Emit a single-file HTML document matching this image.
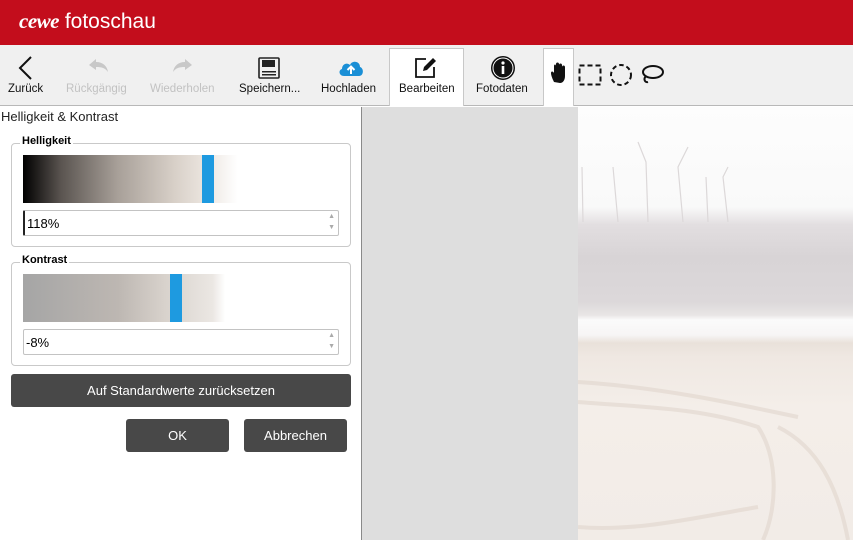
<!DOCTYPE html>
<html><head><meta charset="utf-8"><style>
*{margin:0;padding:0;box-sizing:border-box}
body{width:853px;height:540px;overflow:hidden;position:relative;font-family:"Liberation Sans",sans-serif;background:#fff}
.abs{position:absolute}
#hdr{left:0;top:0;width:853px;height:45px;background:#c30d1c}
#tb{left:0;top:45px;width:853px;height:61px;background:#f0f0f0;border-bottom:1px solid #b8b8b8}
.lbl{position:absolute;top:38px;font-size:11.5px;color:#111;white-space:nowrap}
.dis{color:#c2c2c2}
.sel{position:absolute;background:#fff;border:1px solid #c8c8c8;border-bottom:none}
.grp{position:absolute;left:11px;width:340px;border:1px solid #c9c9c9;border-radius:4px}
.gt{position:absolute;left:8px;top:-9px;background:#fff;font-size:11px;font-weight:bold;padding:0 2px}
.inp{position:absolute;left:11px;width:316px;height:26px;border:1px solid #c3c3c3;border-radius:2px;font-size:13px;padding:5px 2px}
.sp{position:absolute;right:3px;font-size:7px;color:#aaa;line-height:8px}
.btn{position:absolute;background:#484848;color:#fff;border-radius:3px;font-size:13px;text-align:center}
.bar{position:absolute;left:11px;width:316px;height:48px}
</style></head><body>
<div id="hdr" class="abs"><div class="abs" style="left:19px;top:9px;color:#fff;font-size:21px;white-space:nowrap"><span style="font-weight:bold;font-style:italic;font-family:'Liberation Serif',serif;letter-spacing:-0.5px">cewe</span> fotoschau</div></div>
<div id="tb" class="abs">
 <div class="sel" style="left:389px;top:3px;width:75px;height:58px"></div>
 <div class="sel" style="left:543px;top:3px;width:31px;height:58px"></div>
 <svg class="abs" style="left:16px;top:10px" width="20" height="26"><path d="M15 2 L4 13 L15 24" fill="none" stroke="#111" stroke-width="2"/></svg>
 <div class="lbl" style="left:8px">Zurück</div>
 <svg class="abs" style="left:86px;top:13px" width="24" height="16"><path d="M3 7 L10 1 V4 C17 4 21 8 22 14 C19 10 16 9 10 9 V12 Z" fill="#c8c8c8"/></svg>
 <div class="lbl dis" style="left:66px">Rückgängig</div>
 <svg class="abs" style="left:171px;top:13px" width="24" height="16"><path d="M21 7 L14 1 V4 C7 4 3 8 2 14 C5 10 8 9 14 9 V12 Z" fill="#c8c8c8"/></svg>
 <div class="lbl dis" style="left:150px">Wiederholen</div>
 <svg class="abs" style="left:258px;top:12px" width="22" height="22"><rect x="1" y="1" width="20" height="20" rx="1" fill="none" stroke="#222" stroke-width="1.6"/><rect x="4" y="3" width="13" height="7" fill="#222"/><rect x="4" y="14" width="14" height="1.5" fill="#222"/><rect x="4" y="17" width="14" height="1.5" fill="#222"/></svg>
 <div class="lbl" style="left:239px">Speichern...</div>
 <svg class="abs" style="left:338px;top:14px" width="26" height="18"><path d="M6 17 C1 17 0 11 4 10 C4 5 9 3 12 6 C14 1 22 2 22 8 C26 9 26 17 21 17 Z" fill="#1a8fd6"/><path d="M13 15 V8 M9.5 11 L13 7.5 L16.5 11" stroke="#fff" stroke-width="2" fill="none"/></svg>
 <div class="lbl" style="left:321px">Hochladen</div>
 <svg class="abs" style="left:414px;top:12px" width="24" height="22"><path d="M12 2 H2 V20 H20 V10" fill="none" stroke="#111" stroke-width="1.8"/><path d="M9 14 L10 10 L19 1 L22 4 L13 13 Z" fill="#111"/></svg>
 <div class="lbl" style="left:399px">Bearbeiten</div>
 <svg class="abs" style="left:490px;top:10px" width="26" height="26"><circle cx="13" cy="13" r="12" fill="#111"/><circle cx="13" cy="13" r="10" fill="none" stroke="#fff" stroke-width="1"/><circle cx="13" cy="8" r="1.6" fill="#fff"/><rect x="11.7" y="11" width="2.6" height="8" fill="#fff"/></svg>
 <div class="lbl" style="left:476px">Fotodaten</div>
 <svg class="abs" style="left:550px;top:17px" width="18" height="22"><path d="M4 20 C2 16 1 13 1 11 C1 9 3 9 4 11 V4 C4 2 6 2 6 4 V2 C6 0 9 0 9 2 V3 C9 1 12 1 12 3 V5 C12 3 15 3 15 5 V14 C15 18 13 21 10 21 Z" fill="#111"/></svg>
 <svg class="abs" style="left:578px;top:19px" width="24" height="22"><rect x="1.5" y="1.5" width="21" height="19" fill="none" stroke="#111" stroke-width="2" stroke-dasharray="5 3"/></svg>
 <svg class="abs" style="left:608px;top:18px" width="26" height="24"><circle cx="13" cy="12" r="10" fill="none" stroke="#111" stroke-width="2" stroke-dasharray="4.5 3"/></svg>
 <svg class="abs" style="left:639px;top:19px" width="26" height="22"><ellipse cx="14" cy="8" rx="10" ry="6" fill="none" stroke="#111" stroke-width="2"/><path d="M7 12 C4 15 6 19 9 18" fill="none" stroke="#111" stroke-width="2"/></svg>
</div>
<div class="abs" style="left:1px;top:109px;font-size:13px;color:#222">Helligkeit &amp; Kontrast</div>

<div class="grp" style="top:143px;height:104px"><div class="gt">Helligkeit</div>
 <div class="bar" style="top:11px;background:linear-gradient(90deg,#000 0%,#5a5450 12%,#a8a099 30%,#d8d0c8 48%,#ece6e0 58%,#fff 68%)"></div>
 <div class="abs" style="left:190px;top:11px;width:12px;height:48px;background:#1e9ae0"></div>
 <div class="inp" style="top:66px;border-left:2px solid #222">118%<span class="sp" style="top:2px">▲</span><span class="sp" style="top:13px">▼</span></div>
</div>
<div class="grp" style="top:262px;height:104px"><div class="gt">Kontrast</div>
 <div class="bar" style="top:11px;background:linear-gradient(90deg,#a5a5a5 0%,#bdb7b2 30%,#d8d2cc 45%,#ebe7e3 60%,#fff 64%)"></div>
 <div class="abs" style="left:158px;top:11px;width:12px;height:48px;background:#1e9ae0"></div>
 <div class="inp" style="top:66px">-8%<span class="sp" style="top:2px">▲</span><span class="sp" style="top:13px">▼</span></div>
</div>
<div class="btn" style="left:11px;top:374px;width:340px;height:33px;line-height:33px">Auf Standardwerte zurücksetzen</div>
<div class="btn" style="left:126px;top:419px;width:103px;height:33px;line-height:33px">OK</div>
<div class="btn" style="left:244px;top:419px;width:103px;height:33px;line-height:33px">Abbrechen</div>

<div class="abs" style="left:361px;top:107px;width:1px;height:433px;background:#8a8a8a"></div>
<div class="abs" style="left:362px;top:107px;width:216px;height:433px;background:#dedede"></div>
<div class="abs" style="left:578px;top:107px;width:275px;height:433px;background:linear-gradient(180deg,#fdfdfd 0,#f9f9f9 100px,#e2dee0 118px,#d8d4d6 150px,#dcd8da 195px,#e8e5e5 208px,#fbfbfb 213px,#f7f5f5 228px,#e9e1da 236px,#efe8e2 250px,#f4eee9 300px,#f2ece7 433px)"></div>
<svg class="abs" style="left:578px;top:107px" width="275" height="433"><g stroke="#dcd8d9" stroke-width="1.2" fill="none"><path d="M40 115 L35 60 M70 115 L68 55 L60 35 M105 115 L100 60 L110 40 M150 115 L145 70 L150 60 M5 115 L4 60 M130 115 L128 70"/></g><g stroke="#e2d8d0" stroke-width="4" fill="none" opacity="0.7"><path d="M0 275 C80 280 150 295 220 310 M0 295 C60 300 120 300 180 320 C200 350 200 400 185 433 M200 320 C240 340 260 380 270 433 M0 420 C60 425 120 410 180 400"/></g></svg>
</body></html>
